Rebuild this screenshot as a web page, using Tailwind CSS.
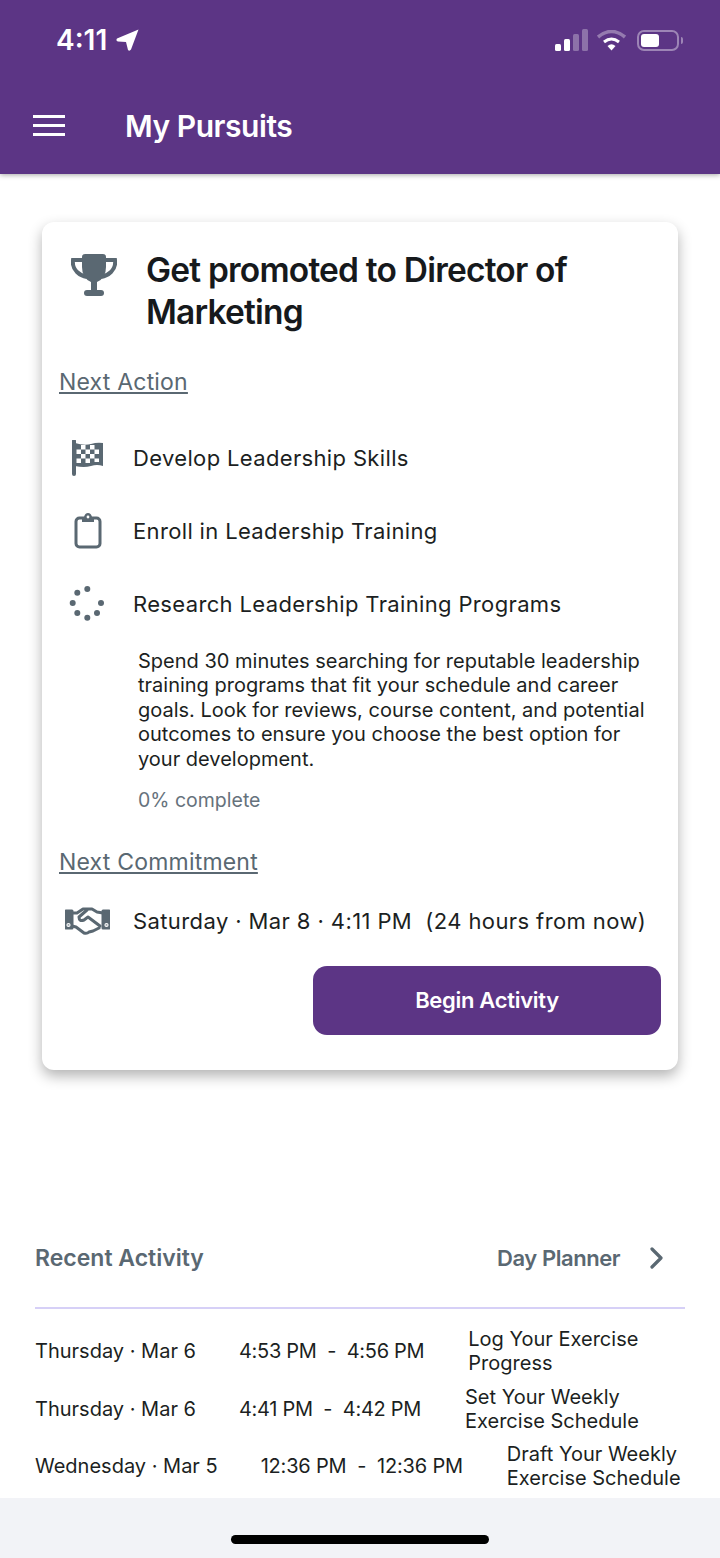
<!DOCTYPE html>
<html lang="en">
<head>
    <meta charset="UTF-8">
    <meta name="viewport" content="width=device-width, initial-scale=1.0">
    <title>My Pursuits</title>
    <script src="https://cdn.jsdelivr.net/npm/@tailwindcss/browser@4"></script>
</head>
<body class="bg-white font-['Inter',sans-serif] text-[#1c1f22]">
    <div class="w-[720px] h-[1558px] flex flex-col overflow-hidden">
        <!-- Header -->
        <header class="h-[174px] shrink-0 bg-[#5c3585] text-white shadow-[0_1px_5px_rgba(0,0,0,0.35)] relative z-10">
            <div class="h-[80px] flex items-center justify-between pl-[56px] pr-[38px]">
                <div class="flex items-center gap-[9px]">
                    <span class="text-[28px] font-semibold leading-none">4:11</span>
                    <svg width="23" height="22" viewBox="0 0 23 22"><path d="M22.5 0.5 L1 9.5 Q-0.5 12 2 12.5 L10 13 L12 21 Q13.5 22.5 15 20.5 Z" fill="#fff"/></svg>
                </div>
                <div class="flex items-center">
                    <svg width="33" height="22" viewBox="0 0 33 22">
                        <rect x="0" y="15" width="6" height="7" rx="1.5" fill="#fff"/>
                        <rect x="9" y="10" width="6" height="12" rx="1.5" fill="#fff"/>
                        <rect x="18" y="5" width="6" height="17" rx="1.5" fill="#fff" fill-opacity="0.3"/>
                        <rect x="27" y="0" width="6" height="22" rx="1.5" fill="#fff" fill-opacity="0.3"/>
                    </svg>
                    <svg class="ml-[9px]" width="29" height="21" viewBox="0 0 29 21">
                        <path d="M1 7 Q14.5 -4 28 7" fill="none" stroke="#fff" stroke-opacity="0.35" stroke-width="3.6"/>
                        <path d="M7 12 Q14.5 6 22 12" fill="none" stroke="#fff" stroke-width="3"/>
                        <path d="M10.5 16 Q14.5 12.5 18.5 16 L14.5 20.5 Z" fill="#fff"/>
                    </svg>
                    <div class="ml-[11px] w-[42px] h-[21px] rounded-[7px] border-2 border-white/40 p-[2px] relative">
                        <div class="w-[18px] h-full bg-white rounded-[3px]"></div>
                        <div class="absolute right-[-6px] top-[5px] w-[2px] h-[7px] rounded-r bg-white/40"></div>
                    </div>
                    <div class="w-[3px]"></div>
                </div>
            </div>
            <div class="h-[94px] flex items-center pl-[33px] pb-[2px]">
                <div class="w-[32px] flex flex-col gap-[6px] pb-[1px]">
                    <div class="h-[3px] bg-white"></div>
                    <div class="h-[3px] bg-white"></div>
                    <div class="h-[3px] bg-white"></div>
                </div>
                <h1 class="ml-[60px] text-[30px] font-semibold tracking-[-0.45px]">My Pursuits</h1>
            </div>
        </header>

        <!-- Pursuit card -->
        <main class="flex-1 min-h-0 overflow-hidden">
            <section class="ml-[42px] mt-[48px] w-[636px] h-[848px] bg-white rounded-[12px] shadow-[0_6px_14px_rgba(0,0,0,0.3)] pl-[17px] pr-[17px] pt-[27px]">
                <div class="flex items-start">
                    <svg class="ml-[12px] mt-[5px] shrink-0" width="46" height="42" viewBox="0 0 46 42">
                        <path d="M11 6 H2 Q1 13 6 18 Q10 22 16 23 M35 6 H44 Q45 13 40 18 Q36 22 30 23" fill="none" stroke="#5a6872" stroke-width="4"/>
                        <path d="M11 3 Q11 0 14 0 H32 Q35 0 35 3 V13 Q35 24 26 28 V36 H20 V28 Q11 24 11 13 Z" fill="#5a6872"/>
                        <rect x="13" y="36" width="20" height="6" rx="3" fill="#5a6872"/>
                    </svg>
                    <h2 class="ml-[29px] w-[490px] text-[33.5px] leading-[42px] font-semibold tracking-[-0.8px] text-[#16191c]">Get promoted to Director of Marketing</h2>
                </div>

                <h3 class="mt-[35px] text-[23px] tracking-[0.2px] leading-[28px] text-[#5a6872] underline underline-offset-[2px] decoration-[1.5px]">Next Action</h3>

                <div class="mt-[44px] flex items-center h-[36px]">
                    <svg class="ml-[12px] shrink-0" width="33" height="36" viewBox="0 0 33 36">
                        <path d="M3 1 L3 34" stroke="#5a6872" stroke-width="4" stroke-linecap="round"/>
                        <path d="M4 3 Q13 6 20 4 Q26 2 32 3 V26 Q26 24 20 26 Q13 28 4 26 Z" fill="#5a6872"/>
                        <path d="M10 5 h4.5 v4.5 h-4.5 z M19 5 h4.5 v4.5 h-4.5 z M5.5 9.5 h4.5 v4.5 h-4.5 z M14.5 9.5 h4.5 v4.5 h-4.5 z M23.5 9.5 h4.5 v4.5 h-4.5 z M10 14 h4.5 v4.5 h-4.5 z M19 14 h4.5 v4.5 h-4.5 z M5.5 18.5 h4.5 v4.5 h-4.5 z M14.5 18.5 h4.5 v4.5 h-4.5 z M23.5 18.5 h4.5 v3.5 h-4.5 z" fill="#fff"/>
                    </svg>
                    <span class="ml-[29px] text-[22px] tracking-[0.35px]">Develop Leadership Skills</span>
                </div>
                <div class="mt-[37px] flex items-center h-[36px]">
                    <svg class="ml-[15px] shrink-0" width="28" height="36" viewBox="0 0 28 36">
                        <rect x="2" y="5" width="24" height="29" rx="3.5" fill="none" stroke="#5a6872" stroke-width="3"/>
                        <path d="M8 4 H10 Q11 0 14 0 Q17 0 18 4 H20 V9 H8 Z" fill="#5a6872"/>
                        <circle cx="14" cy="4" r="1.4" fill="#fff"/>
                    </svg>
                    <span class="ml-[31px] text-[22px] tracking-[0.35px]">Enroll in Leadership Training</span>
                </div>
                <div class="mt-[37px] flex items-center h-[36px]">
                    <svg class="ml-[10px] shrink-0" width="36" height="36" viewBox="0 0 36 36" fill="#5a6872">
                        <circle cx="18.3" cy="3" r="3"/>
                        <circle cx="8.3" cy="6.7" r="3"/>
                        <circle cx="3.7" cy="17" r="3"/>
                        <circle cx="8.3" cy="27" r="3"/>
                        <circle cx="18.3" cy="31.7" r="3"/>
                        <circle cx="28" cy="27" r="3"/>
                        <circle cx="32" cy="17" r="3"/>
                    </svg>
                    <span class="ml-[28px] text-[22px] tracking-[0.35px]">Research Leadership Training Programs</span>
                </div>

                <p class="mt-[27px] ml-[79px] w-[520px] text-[20px] leading-[24.4px]">Spend 30 minutes searching for reputable leadership training programs that fit your schedule and career goals. Look for reviews, course content, and potential outcomes to ensure you choose the best option for your development.</p>
                <p class="mt-[17px] ml-[79px] text-[19.5px] leading-[24px] text-[#66727c]">0% complete</p>

                <h3 class="mt-[36px] text-[23px] tracking-[0.2px] leading-[28px] text-[#5a6872] underline underline-offset-[2px] decoration-[1.5px]">Next Commitment</h3>

                <div class="mt-[29px] flex items-center h-[32px]">
                    <svg class="ml-[6px] shrink-0" width="45" height="28" viewBox="0 0 45 28" fill="none" stroke="#5a6872" stroke-width="3" stroke-linejoin="round" stroke-linecap="round">
                        <path d="M1 4 H7 V21 H1 Z" fill="#5a6872"/>
                        <path d="M38 4 H44 V21 H38 Z" fill="#5a6872"/>
                        <path d="M7 6 H12 L18 2 H27 L32 5 L38 6"/>
                        <path d="M22 3 L14 10 Q14 15 19 13 L23 10 L35 19"/>
                        <path d="M7 19 L11 20 L19 26 Q22 27 24 25 L28 24 L34 21"/>
                        <circle cx="3.5" cy="18" r="0.6" fill="#fff" stroke="#fff"/>
                        <circle cx="41.5" cy="18" r="0.6" fill="#fff" stroke="#fff"/>
                    </svg>
                    <span class="ml-[23px] text-[22px] tracking-[0.4px] whitespace-pre">Saturday · Mar 8 · 4:11 PM  (24 hours from now)</span>
                </div>

                <button class="mt-[29px] ml-[254px] w-[348px] h-[69px] bg-[#5c3585] text-white text-[22px] font-semibold tracking-[-0.3px] rounded-[14px]">Begin Activity</button>
            </section>

            <!-- Recent activity -->
            <section class="mt-[168px] ml-[35px] w-[650px]">
                <div class="flex items-center justify-between h-[40px] text-[#5a6872] font-semibold">
                    <span class="text-[23px]">Recent Activity</span>
                    <div class="flex items-center">
                        <span class="text-[22px] tracking-[-0.45px]">Day Planner</span>
                        <svg class="ml-[30px] mr-[22px]" width="13" height="22" viewBox="0 0 13 22" fill="none" stroke="#5a6872" stroke-width="3.2" stroke-linecap="round" stroke-linejoin="round"><path d="M2 2 L11 11 L2 20"/></svg>
                    </div>
                </div>
                <div class="mt-[29px] h-[2px] bg-[#d6d0f7]"></div>
                <div class="mt-[18px] flex flex-col gap-[8.7px] text-[20px] leading-[24.4px]">
                    <div class="flex items-center gap-[44px]">
                        <span class="whitespace-nowrap -mr-[1px]">Thursday · Mar 6</span>
                        <span class="whitespace-pre tracking-[-0.3px]">4:53 PM  -  4:56 PM</span>
                        <span class="w-[190px]">Log Your Exercise Progress</span>
                    </div>
                    <div class="flex items-center gap-[44px]">
                        <span class="whitespace-nowrap -mr-[1px]">Thursday · Mar 6</span>
                        <span class="whitespace-pre tracking-[-0.3px]">4:41 PM  -  4:42 PM</span>
                        <span class="w-[190px]">Set Your Weekly Exercise Schedule</span>
                    </div>
                    <div class="flex items-center gap-[44px]">
                        <span class="whitespace-nowrap -mr-[1px]">Wednesday · Mar 5</span>
                        <span class="whitespace-pre tracking-[-0.2px]">12:36 PM  -  12:36 PM</span>
                        <span class="w-[176px] shrink-0">Draft Your Weekly Exercise Schedule</span>
                    </div>
                </div>
            </section>
        </main>

        <!-- Home indicator -->
        <footer class="h-[60px] shrink-0 bg-[#f2f3f7] flex justify-center pt-[37px]">
            <div class="w-[258px] h-[9px] rounded-full bg-black"></div>
        </footer>
    </div>
</body>
</html>
